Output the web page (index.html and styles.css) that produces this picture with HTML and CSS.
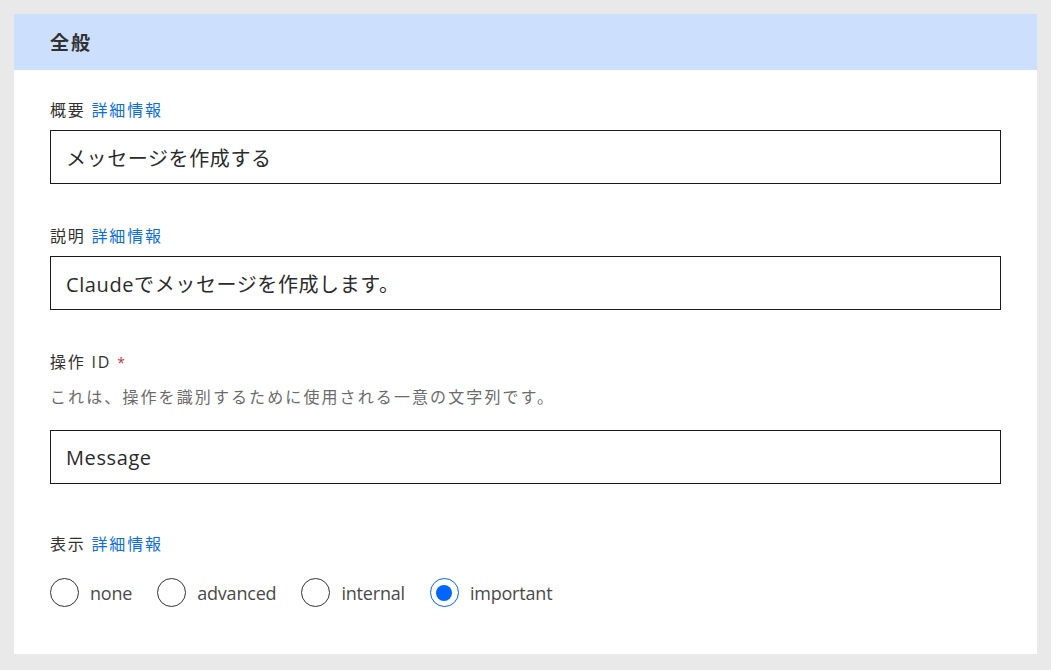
FILE: index.html
```html
<!DOCTYPE html>
<html lang="ja">
<head>
<meta charset="utf-8">
<link rel="stylesheet" href="styles.css">
</head>
<body>
<section class="panel">
  <header class="panel-header"><h2 class="panel-title">全般</h2></header>
  <div class="panel-body">
    <div class="field field-first">
      <div class="label">概要 <a class="link" href="#">詳細情報</a></div>
      <div class="input">メッセージを作成する</div>
    </div>
    <div class="field">
      <div class="label">説明 <a class="link" href="#">詳細情報</a></div>
      <div class="input">Claudeでメッセージを作成します。</div>
    </div>
    <div class="field">
      <div class="label label-tight">操作 ID <span class="req">*</span></div>
      <div class="desc">これは、操作を識別するために使用される一意の文字列です。</div>
      <div class="input">Message</div>
    </div>
    <div class="field field-last">
      <div class="label">表示 <a class="link" href="#">詳細情報</a></div>
      <div class="radios">
        <label class="radio"><span class="circle"></span><span class="rtext">none</span></label>
        <label class="radio"><span class="circle"></span><span class="rtext">advanced</span></label>
        <label class="radio"><span class="circle"></span><span class="rtext">internal</span></label>
        <label class="radio"><span class="circle checked"></span><span class="rtext">important</span></label>
      </div>
    </div>
  </div>
</section>
</body>
</html>
```

FILE: styles.css
```css
html, body {
  margin: 0;
  padding: 0;
}
body {
  background: #e9e9e9;
  padding: 14px 14px 16px 14px;
  font-family: "Open Sans", "Noto Sans CJK JP", sans-serif;
  color: #323130;
}
.panel {
  background: #ffffff;
  height: 640px;
  box-sizing: border-box;
}
.panel-header {
  background: #cce0fd;
  height: 56px;
  display: flex;
  align-items: center;
  padding-left: 36px;
}
.panel-title {
  margin: 0;
  font-size: 19px;
  font-weight: 700;
  letter-spacing: 2px;
  color: #323130;
}
.panel-body {
  padding: 28px 36px 0 36px;
}
.field {
  margin-top: 40px;
}
.field-first {
  margin-top: 0;
}
.field-last {
  margin-top: 48px;
}
.label {
  font-size: 16px;
  line-height: 24px;
  letter-spacing: 1.8px;
  color: #323130;
  margin-bottom: 8px;
}
.label-tight {
  margin-bottom: 0;
}
.link {
  color: #0a6ee6;
  text-decoration: none;
}
.req {
  color: #c4314b;
  font-size: 14px;
}
.desc {
  font-size: 16px;
  line-height: 24px;
  letter-spacing: 2.1px;
  color: #6b6b6b;
  margin-top: 10px;
  margin-bottom: 21px;
}
.input {
  height: 54px;
  box-sizing: border-box;
  border: 1px solid #1b1b1b;
  padding: 0 15px;
  display: flex;
  align-items: center;
  font-size: 20px;
  letter-spacing: 0.6px;
  color: #2b2b2b;
}
.radios {
  display: flex;
  align-items: center;
  gap: 25px;
  margin-top: 22px;
}
.radio {
  display: flex;
  align-items: center;
  gap: 11px;
}
.circle {
  width: 29px;
  height: 29px;
  box-sizing: border-box;
  border: 1px solid #333333;
  border-radius: 50%;
  display: flex;
  align-items: center;
  justify-content: center;
}
.circle.checked {
  border-color: #0066ff;
}
.circle.checked::after {
  content: "";
  width: 16px;
  height: 16px;
  border-radius: 50%;
  background: #0066ff;
}
.rtext {
  font-size: 18px;
  letter-spacing: -0.2px;
  color: #4a4a4a;
}
```
